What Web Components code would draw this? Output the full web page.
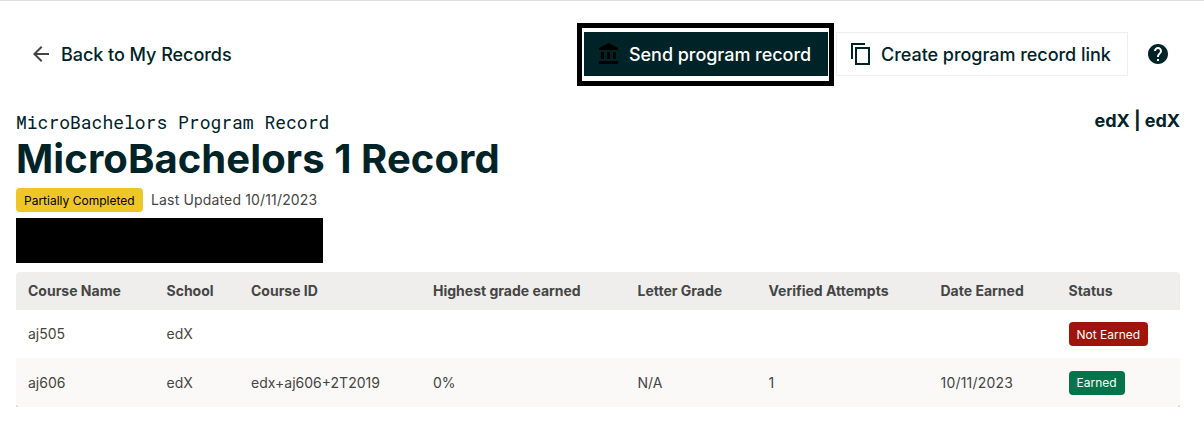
<!DOCTYPE html>
<html lang="en">
<head>
<meta charset="utf-8">
<title>Program Record</title>
<style>
body{margin:0;background:#fff;font-family:Inter,"Liberation Sans",sans-serif;color:#454545}
</style>
</head>
<body>
<record-page></record-page>
<script>
const define = (name, html) => customElements.define(name, class extends HTMLElement {
  constructor() {
    super();
    this.attachShadow({ mode: 'open' }).innerHTML = html;
  }
});

define('status-badge', `<style>
:host{display:inline-block;box-sizing:border-box;height:24px;line-height:25px;padding:0 8px;border-radius:4px;font-size:12px;letter-spacing:0;white-space:nowrap;color:#fff;background:#a0150b}
:host([kind=success]){background:#04754a;line-height:24px}
:host([kind=warning]){background:#eec726;color:#000}
</style><slot></slot>`);

define('action-button', `<style>
:host{display:flex;box-sizing:border-box;height:44px;align-items:center;font-size:18px;font-weight:500;letter-spacing:-.04px;color:#002327;white-space:nowrap}
:host([kind=primary]){position:relative;background:#002327;color:#fff;width:244px;padding-left:13px}
:host([kind=primary])::after{content:"";position:absolute;box-sizing:border-box;left:-7px;top:-9px;width:257px;height:63px;border:5px solid #000}
:host([kind=outline]){border:1px solid #efeeed;width:292px;padding-left:12px}
slot[name=icon]{display:block;width:24px;height:24px;margin-right:8px;flex:none}
.text{display:block}
</style><slot name="icon"></slot><span class="text"><slot></slot></span>`);

define('record-toolbar', `<style>
:host{display:flex;align-items:center;padding:32px 34px 0 29px;height:44px}
svg{display:block;width:24px;height:24px}
.buttons{display:flex;margin-left:auto;gap:8px;align-items:center}
.help{margin-left:18px}
</style>
<action-button><svg slot="icon" viewBox="0 0 24 24" fill="#454545"><path d="M20 11H7.83l5.59-5.59L12 4l-8 8 8 8 1.41-1.41L7.83 13H20v-2z"/></svg>Back to My Records</action-button>
<div class="buttons">
<action-button kind="primary"><svg slot="icon" viewBox="0 0 24 24" fill="#000"><path d="M4 10v7h3v-7H4zm6 0v7h3v-7h-3zM2 22h19v-3H2v3zm14-12v7h3v-7h-3zm-4.500-9L2 6v2h19V6l-9.500-5z"/></svg>Send program record</action-button>
<action-button kind="outline"><svg slot="icon" viewBox="0 0 24 24" fill="#002327"><path d="M16 1H2v16h2V3h12V1zm5 4H6v18h15V5zm-2 16H8V7h11v14z"/></svg>Create program record link</action-button>
</div>
<svg class="help" viewBox="0 0 24 24" fill="#002327"><path d="M12 2C6.480 2 2 6.480 2 12s4.480 10 10 10 10-4.480 10-10S17.520 2 12 2zm1 17h-2v-2h2v2zm2.070-7.750l-.9.920C13.450 12.900 13 13.500 13 15h-2v-.5c0-1.100.45-2.100 1.170-2.830l1.240-1.260c.37-.36.59-.86.59-1.410 0-1.100-.9-2-2-2s-2 .9-2 2H8c0-2.210 1.790-4 4-4s4 1.790 4 4c0 .88-.36 1.680-.93 2.250z"/></svg>`);

define('record-heading', `<style>
:host{display:flex;justify-content:space-between;padding:33px 24px 0 16px;color:#002327;height:163px}
.kind{font:18px/26px "Roboto Mono","DejaVu Sans Mono",monospace;padding-bottom:2px}
h1{margin:0;font-size:40px;line-height:44px;font-weight:700;letter-spacing:.08px}
.meta{display:flex;align-items:center;gap:8.500px;margin-top:7px;font-size:14px;line-height:24px;letter-spacing:.15px;color:#454545}
.redacted{width:307px;height:45px;background:#000;margin-top:6px}
.org{font-size:18px;line-height:24px;font-weight:700;letter-spacing:-.05px}
</style>
<div><div class="kind">MicroBachelors Program Record</div><h1>MicroBachelors 1 Record</h1>
<div class="meta"><status-badge kind="warning">Partially Completed</status-badge><span>Last Updated 10/11/2023</span></div><div class="redacted"></div></div>
<div class="org">edX | edX</div>`);

define('grade-row', `<style>
:host{display:grid;grid-template-columns:138.5px 84.500px 182px 204.500px 131px 172px 128px 123.500px;height:48px;align-items:center;font-size:14px;line-height:24px}
:host([head]){height:38px;background:#efeeec;font-weight:700;border-radius:4px 4px 0 0}
:host([last]){height:49px;background:linear-gradient(45deg,#d8d8d7 2px,transparent 2px),linear-gradient(-45deg,#d8d8d7 2px,transparent 2px),#faf9f7}
::slotted(*){padding-left:12px;white-space:nowrap}
</style><slot></slot>`);

define('grade-table', `<style>
:host{display:block;margin:0 24px 0 16px}
status-badge{vertical-align:top}
.date{letter-spacing:.2px}
</style>
<grade-row head><span>Course Name</span><span>School</span><span>Course ID</span><span>Highest grade earned</span><span>Letter Grade</span><span>Verified Attempts</span><span>Date Earned</span><span>Status</span></grade-row>
<grade-row><span>aj505</span><span>edX</span><span></span><span></span><span></span><span></span><span></span><span><status-badge>Not Earned</status-badge></span></grade-row>
<grade-row last><span>aj606</span><span>edX</span><span>edx+aj606+2T2019</span><span>0%</span><span>N/A</span><span>1</span><span class="date">10/11/2023</span><span><status-badge kind="success">Earned</status-badge></span></grade-row>`);

define('record-page', `<style>
:host{display:block;box-sizing:border-box;height:430px;overflow:hidden;background:linear-gradient(#dedede,#dedede) top/100% 1px no-repeat}
</style><record-toolbar></record-toolbar><record-heading></record-heading><grade-table></grade-table>`);
</script>
</body>
</html>
